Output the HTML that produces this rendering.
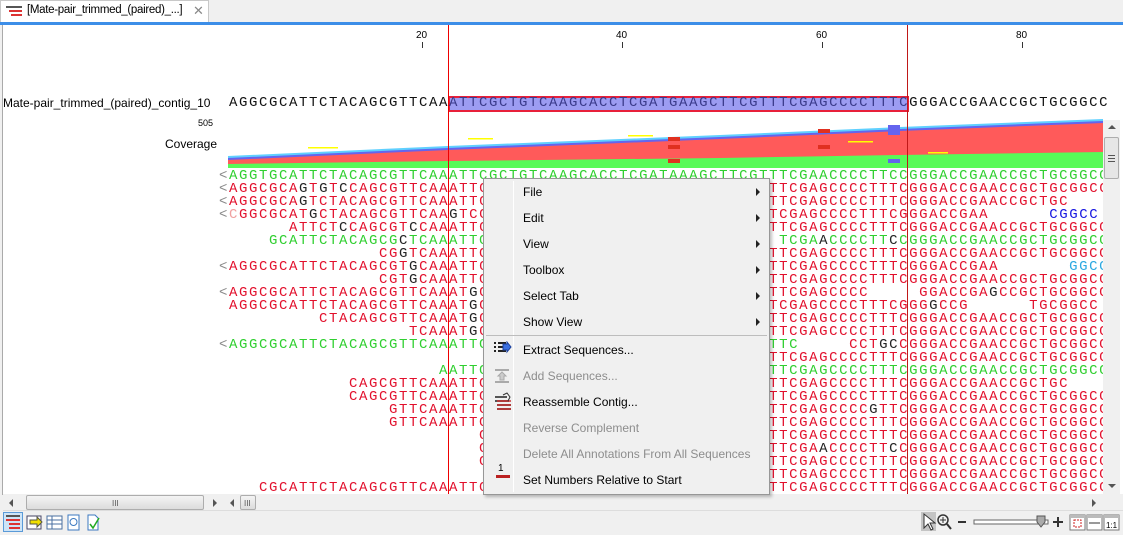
<!DOCTYPE html>
<html><head><meta charset="utf-8"><style>
*{margin:0;padding:0;box-sizing:border-box}
body{width:1123px;height:535px;overflow:hidden;background:#f0f0f0;font-family:"Liberation Sans",sans-serif;position:relative}
.abs{position:absolute}
.seq{position:absolute;left:219px;width:884px;height:13px;line-height:13px;font-family:"Liberation Mono",monospace;font-size:14px;letter-spacing:1.6px;white-space:pre;overflow:hidden;color:#e2102c}
.g{color:#2fcf2f}
.b{color:#1515e0}
.c{color:#2aa8e0}
.k{color:#222}
.mi{position:absolute;left:39px;font-size:12px;color:#000;height:26px;line-height:26px}
.dis{color:#8d8d8d}
.arr{position:absolute;left:272px;width:0;height:0;border-top:4px solid transparent;border-bottom:4px solid transparent;border-left:4px solid #222}
</style></head><body>
<!-- tab bar -->
<div class="abs" style="left:0;top:0;width:209px;height:22px;background:#fff;border:1px solid #c8c8c8;border-bottom:none"></div>
<svg class="abs" style="left:6px;top:5px" width="18" height="12"><rect x="0" y="1" width="16" height="2" fill="#555"/><rect x="3" y="5" width="13" height="2" fill="#d33"/><rect x="5" y="9" width="11" height="2" fill="#d33"/></svg>
<div class="abs" style="left:27px;top:4px;font-size:11.5px;letter-spacing:-0.3px;color:#000">[Mate-pair_trimmed_(paired)_...]</div>
<div class="abs" style="left:193px;top:3px;font-size:13px;color:#888">✕</div>
<div class="abs" style="left:0;top:22px;width:1123px;height:3px;background:#3c8ee8"></div>
<!-- main panel -->
<div class="abs" style="left:2px;top:25px;width:1121px;height:470px;background:#fff;border-left:1px solid #aaa"></div>
<!-- ruler -->
<div class="abs" style="left:416px;top:30px;font-size:10px">20</div>
<div class="abs" style="left:616px;top:30px;font-size:10px">40</div>
<div class="abs" style="left:816px;top:30px;font-size:10px">60</div>
<div class="abs" style="left:1016px;top:30px;font-size:10px">80</div>
<div class="abs" style="left:422px;top:42px;width:1px;height:6px;background:#333"></div>
<div class="abs" style="left:622px;top:42px;width:1px;height:6px;background:#333"></div>
<div class="abs" style="left:822px;top:42px;width:1px;height:6px;background:#333"></div>
<div class="abs" style="left:1022px;top:42px;width:1px;height:6px;background:#333"></div>
<!-- labels -->
<div class="abs" style="left:3px;top:96px;font-size:12px">Mate-pair_trimmed_(paired)_contig_10</div>
<div class="abs" style="left:198px;top:118px;font-size:9px">505</div>
<div class="abs" style="left:165px;top:137px;font-size:12px">Coverage</div>
<!-- selection -->
<div class="abs" style="left:448px;top:96px;width:461px;height:16px;background:#9c9cf2;border:2px solid #e8203a"></div>
<div class="seq" style="top:97px;color:#111;width:890px">&#32;AGGCGCATTCTACAGCGTTCAA<span style="color:#3a3a8a">ATTCGCTGTCAAGCACCTCGATGAAGCTTCGTTTCGAGCCCCTTTC</span>GGGACCGAACCGCTGCGGCC</div>
<!-- coverage -->
<svg class="abs" style="left:228px;top:115px" width="875" height="55">
<polygon points="0,41 220,31 492,20 672,12 875,4 875,53 0,53" fill="#5fd0ff"/>
<polygon points="0,43 220,33 492,22 672,14 875,6 875,53 0,53" fill="#6464ee"/>
<polygon points="0,45 220,35 492,24 672,16 875,8 875,53 0,53" fill="#ff5a5a"/>
<polygon points="0,49 220,46 492,43 672,40 875,37 875,53 0,53" fill="#58fa58"/>
<rect x="440" y="22" width="12" height="4" fill="#e03020"/><rect x="440" y="30" width="12" height="4" fill="#e03020"/><rect x="440" y="44" width="12" height="4" fill="#e03020"/>
<rect x="590" y="14" width="12" height="4" fill="#e03020"/><rect x="590" y="30" width="12" height="4" fill="#e03020"/>
<rect x="660" y="10" width="12" height="10" fill="#6464ee"/><rect x="660" y="44" width="12" height="4" fill="#6464ee"/>
<rect x="80" y="32" width="30" height="1.5" fill="#ff0"/><rect x="240" y="23" width="25" height="1.5" fill="#ff0"/><rect x="400" y="20" width="25" height="1.5" fill="#ff0"/><rect x="620" y="26" width="25" height="1.5" fill="#ff0"/><rect x="700" y="37" width="20" height="1.5" fill="#ff0"/>
</svg>
<!-- reads -->
<div class="seq g" style="top:170px"><span style="color:#888">&lt;</span>AGGTGCATTCTACAGCGTTCAAATTCGCTGTCAAGCACCTCGATAAAGCTTCGTTTCGAACCCCTTCCGGGACCGAACCGCTGCGGCC</div>
<div class="seq" style="top:183px"><span style="color:#888">&lt;</span>AGGCGCA<span class="k">G</span>T<span class="k">G</span>T<span class="k">C</span>CAGCGTTCAAATTCGCTGTCAAGCACCTCGATGAAGCTTCGTTTCGAGCCCCTTTCGGGACCGAACCGCTGCGGCC</div>
<div class="seq" style="top:196px"><span style="color:#888">&lt;</span>AGGCGCA<span class="k">G</span>TCTACAGCGTTCAAATTCGCTGTCAAGCACCTCGATGAAGCTTCGTTTCGAGCCCCTTTCGGGACCGAACCGCTGC</div>
<div class="seq" style="top:209px"><span style="color:#888">&lt;</span><span style="color:#f0a0a0">C</span>GGCGCAT<span class="k">G</span>CTACAGCGTTCAA<span class="k">G</span>TCGCTGTCAAGCACCTCGATGAAGCTTCGTTTCGAGCCCCTTTCGGGACCGAA      <span class="b">CGGCC</span></div>
<div class="seq" style="top:222px">       ATTCT<span class="k">C</span>CAGCGT<span class="k">C</span>CAAATTCGCTGTCAAGCACCTCGATGAAGCTTCGTTTCGAGCCCCTTTCGGGACCGAACCGCTGCGGCC</div>
<div class="seq g" style="top:235px">     GCATTCTACAGCG<span class="k">C</span>TCAAATTCGCTGTCAAGCACCTCGATGAAGCTTCGT TCGA<span class="k">A</span>CCCCTT<span class="k">C</span>CGGGACCGAACCGCTGCGGCC</div>
<div class="seq" style="top:248px">                CG<span class="k">G</span>TCAAATTCGCTGTCAAGCACCTCGATGAAGCTTCGTTTCGAGCCCCTTTCGGGACCGAACCGCTGCGGCC</div>
<div class="seq" style="top:261px"><span style="color:#888">&lt;</span>AGGCGCATTCTACAGCGT<span class="k">G</span>CAAATTCGCTGTCAAGCACCTCGATGAAGCTTCGTTTCGAGCCCCTTTCGGGACCGAA       <span class="c">GGCC</span></div>
<div class="seq" style="top:274px">                CGT<span class="k">G</span>CAAATTCGCTGTCAAGCACCTCGATGAAGCTTCGTTTCGAGCCCCTTTCGGGACCGAACCGCTGCGGCC</div>
<div class="seq" style="top:287px"><span style="color:#888">&lt;</span>AGGCGCATTCTACAGCGTTCAAAT<span class="k">G</span>CGCTGTCAAGCACCTCGATGAAGCTTCGTTTCGAGCCCC     GGACCGA<span class="k">G</span>CCGCTGCGGCC</div>
<div class="seq" style="top:300px"> AGGCGCATTCTACAGCGTTCAAAT<span class="k">G</span>CGCTGTCAAGCACCTCGATGAAGCTTCG<span class="k">G</span>TCGAGCCCCTTTCGGG<span class="k">G</span>CCG      TGCGGCC</div>
<div class="seq" style="top:313px">          CTACAGCGTTCAAAT<span class="k">G</span>CGCTGTCAAGCACCTCGATGAAGCTTCGTTTCGAGCCCCTTTCGGGACCGAACCGCTGCGGCC</div>
<div class="seq" style="top:326px">                   TCAAAT<span class="k">G</span>CGCTGTCAAGCACCTCGATGAAGCTTCGTTTCGAGCCCCTTTCGGGACCGAACCGCTGCGGCC</div>
<div class="seq" style="top:339px"><span class="g"><span style="color:#888">&lt;</span>AGGCGCATTCTACAGCGTTCAAATTCGCTGTCAAGCACCTCGATGAAGCTTCGTTTC</span>     CCT<span class="k">GC</span>CGGGACCGAACCGCTGCGGCC</div>
<div class="seq" style="top:352px">                                                       TTCGAGCCCCTTTCGGGACCGAACCGCTGCGGCC</div>
<div class="seq g" style="top:365px">                      AATTCGCTGTCAAGCACCTCGATGAAGCTTCGTTTCGAGCCCCTTTCGGGACCGAACCGCTGCGGCC</div>
<div class="seq" style="top:378px">             CAGCGTTCAAATTCGCTGTCAAGCACCTCGATGAAGCTTCGTTTCGAGCCCCTTTCGGGACCGAACCGCTGC</div>
<div class="seq" style="top:391px">             CAGCGTTCAAATTCGCTGTCAAGCACCTCGATGAAGCTTCGTTTCGAGCCCCTTTCGGGACCGAACCGCTGCGGCC</div>
<div class="seq" style="top:404px">                 GTTCAAATTCGCTGTCAAGCACCTCGATGAAGCTTCGTTTCGAGCCCC<span class="k">G</span>TTCGGGACCGAACCGCTGCGGCC</div>
<div class="seq" style="top:417px">                 GTTCAAATTCGCTGTCAAGCACCTCGATGAAGCTTCGTTTCGAGCCCCTTTCGGGACCGAACCGCTGCGGCC</div>
<div class="seq" style="top:430px">                          CGCTGTCAAGCACCTCGATGAAGCTTCGTTTCGAGCCCCTTTCGGGACCGAACCGCTGCGGCC</div>
<div class="seq" style="top:443px">                          CGCTGTCAAGCACCTCGATGAAGCTTCGTTTCGA<span class="k">A</span>CCCCTT<span class="k">C</span>CGGGACCGAACCGCTGCGGCC</div>
<div class="seq" style="top:456px">                          CGCTGTCAAGCACCTCGATGAAGCTTCGTTTCGAGCCCCTTTCGGGACCGAACCGCTGCGGCC</div>
<div class="seq" style="top:469px">                                                       TTCGAGCCCCTTTCGGGACCGAACCGCTGCGGCC</div>
<div class="seq" style="top:482px;height:12px">    CGCATTCTACAGCGTTCAAATTCGCTGTCAAGCACCTCGATGAAGCTTCGTTTCGAGCCCCTTTCGGGACCGAACCGCTGCGGCC</div>
<!-- cursor lines -->
<div class="abs" style="left:448px;top:25px;width:1px;height:469px;background:#e00"></div>
<div class="abs" style="left:907px;top:25px;width:1px;height:469px;background:#c01818"></div>
<!-- vertical scrollbar -->
<div class="abs" style="left:1103px;top:120px;width:17px;height:374px;background:#f0f0f0"></div>
<div class="abs" style="left:1108px;top:125px;width:0;height:0;border-left:4px solid transparent;border-right:4px solid transparent;border-bottom:4px solid #555"></div>
<div class="abs" style="left:1104px;top:137px;width:15px;height:42px;background:#e6e6e6;border:1px solid #adadad;border-radius:2px"></div>
<div class="abs" style="left:1108px;top:155px;width:7px;height:1px;background:#555;box-shadow:0 3px #555,0 6px #555"></div>
<div class="abs" style="left:1108px;top:484px;width:0;height:0;border-left:4px solid transparent;border-right:4px solid transparent;border-top:4px solid #555"></div>
<!-- horizontal scrollbars -->
<div class="abs" style="left:3px;top:494px;width:1120px;height:17px;background:#f0f0f0;border-bottom:1px solid #ddd"></div>
<div class="abs" style="left:9px;top:499px;width:0;height:0;border-top:4px solid transparent;border-bottom:4px solid transparent;border-right:4px solid #555"></div>
<div class="abs" style="left:26px;top:495px;width:178px;height:15px;background:linear-gradient(#f4f4f4,#dcdcdc);border:1px solid #adadad;border-radius:2px"></div>
<div class="abs" style="left:112px;top:499px;font-size:8px;color:#555">III</div>
<div class="abs" style="left:213px;top:499px;width:0;height:0;border-top:4px solid transparent;border-bottom:4px solid transparent;border-left:4px solid #555"></div>
<div class="abs" style="left:230px;top:499px;width:0;height:0;border-top:4px solid transparent;border-bottom:4px solid transparent;border-right:4px solid #555"></div>
<div class="abs" style="left:240px;top:495px;width:16px;height:15px;background:linear-gradient(#f4f4f4,#dcdcdc);border:1px solid #adadad;border-radius:2px"></div>
<div class="abs" style="left:244px;top:499px;font-size:8px;color:#555">III</div>
<div class="abs" style="left:1092px;top:499px;width:0;height:0;border-top:4px solid transparent;border-bottom:4px solid transparent;border-left:4px solid #555"></div>
<!-- bottom toolbar -->
<div class="abs" style="left:3px;top:512px;width:20px;height:20px;background:#cde4f7;border:1px solid #5a9ad8"></div>
<svg class="abs" style="left:5px;top:514px" width="120" height="18">
<rect x="1" y="1" width="14" height="2" fill="#555"/><rect x="1" y="5" width="14" height="2" fill="#d33"/><rect x="4" y="9" width="11" height="2" fill="#d33"/><rect x="4" y="13" width="11" height="2" fill="#d33"/>
<rect x="22" y="2" width="14" height="13" fill="#fff" stroke="#446"/><path d="M25 6h7v-3l5 5-5 5v-3h-7z" fill="#f2e000" stroke="#554"/>
<rect x="42" y="2" width="15" height="13" fill="#fff" stroke="#4a6fa0"/><path d="M42 6h15M42 10h15M47 2v13" stroke="#4a6fa0"/>
<rect x="63" y="1" width="11" height="15" fill="#fff" stroke="#3b79c0"/><circle cx="68.5" cy="8" r="3.5" fill="none" stroke="#3b79c0"/>
<path d="M83 1h7l3 3v12h-10z" fill="#fff" stroke="#3b79c0"/><path d="M85 10l3 4 6-10" stroke="#2a2" stroke-width="1.5" fill="none"/>
</svg>
<div class="abs" style="left:921px;top:512px;width:15px;height:19px;background:#c4c4c4"></div>
<svg class="abs" style="left:921px;top:512px" width="202" height="20">
<path d="M3 2v14l4-4 3 6 2-1-3-6h5z" fill="#fff" stroke="#333"/>
<circle cx="22" cy="8" r="5" fill="none" stroke="#333" stroke-width="1.5"/><path d="M19 8h6M22 5v6" stroke="#333"/><path d="M26 12l4 5" stroke="#333" stroke-width="2"/>
<path d="M37 10h8" stroke="#333" stroke-width="2"/>
<rect x="53" y="8" width="74" height="4" fill="#fff" stroke="#666"/>
<path d="M116 4h8v6l-4 5-4-5z" fill="#aaa" stroke="#555"/>
<path d="M132 10h10M137 5v10" stroke="#333" stroke-width="2"/>
<rect x="149" y="3" width="15" height="15" fill="#fff" stroke="#777"/><rect x="149" y="3" width="15" height="3" fill="#bbb"/><rect x="153" y="8" width="7" height="7" fill="none" stroke="#c22" stroke-dasharray="2,1"/>
<rect x="166" y="3" width="15" height="15" fill="#fff" stroke="#777"/><rect x="166" y="3" width="15" height="3" fill="#bbb"/><path d="M168 11h11" stroke="#333"/>
<rect x="183" y="3" width="15" height="15" fill="#fff" stroke="#777"/><rect x="183" y="3" width="15" height="3" fill="#bbb"/>
<text x="185" y="16" font-size="8" font-family="Liberation Sans">1:1</text>
</svg>
<!-- context menu -->
<div class="abs" style="left:483px;top:178px;width:287px;height:317px;background:#f0f0f0;border:1px solid #979797;box-shadow:2px 2px 3px rgba(0,0,0,0.25)">
<div class="abs" style="left:29px;top:2px;width:1px;height:311px;background:#e2e2e2;border-right:1px solid #fff"></div>
<div class="mi" style="top:0px">File</div><div class="arr" style="top:9px"></div>
<div class="mi" style="top:26px">Edit</div><div class="arr" style="top:35px"></div>
<div class="mi" style="top:52px">View</div><div class="arr" style="top:61px"></div>
<div class="mi" style="top:78px">Toolbox</div><div class="arr" style="top:87px"></div>
<div class="mi" style="top:104px">Select Tab</div><div class="arr" style="top:113px"></div>
<div class="mi" style="top:130px">Show View</div><div class="arr" style="top:139px"></div>
<div class="abs" style="left:2px;top:156px;width:281px;height:1px;background:#bdbdbd"></div>
<div class="mi" style="top:158px">Extract Sequences...</div>
<div class="mi dis" style="top:184px">Add Sequences...</div>
<div class="mi" style="top:210px">Reassemble Contig...</div>
<div class="mi dis" style="top:236px">Reverse Complement</div>
<div class="mi dis" style="top:262px">Delete All Annotations From All Sequences</div>
<div class="mi" style="top:288px">Set Numbers Relative to Start</div>
<svg class="abs" style="left:9px;top:162px" width="20" height="150">
<path d="M1 2h2M1 6h2M1 10h2M5 2h8M5 6h8M5 10h8" stroke="#222" stroke-width="2"/><path d="M10 3h4v-2l4 5-4 5v-2h-4z" fill="#3a6fe0" stroke="#1a3f9a"/>
<path d="M2 29h14M2 41h14" stroke="#aaa" stroke-width="2"/><path d="M9 31l4 4h-2v4h-4v-4h-2z" fill="#ccc" stroke="#aaa"/>
<path d="M2 56h12M2 60h14M4 64h14M4 68h14" stroke="#555" stroke-width="2"/><path d="M4 60h14M4 64h14M4 68h14" stroke="#c33" stroke-width="1.5"/><path d="M10 54l4-2 3 4-2 4" fill="none" stroke="#333"/>
<text x="5" y="130" font-size="10" font-family="Liberation Sans">1</text><rect x="3" y="134" width="14" height="3" fill="#b22"/>
</svg>
</div>
</body></html>
